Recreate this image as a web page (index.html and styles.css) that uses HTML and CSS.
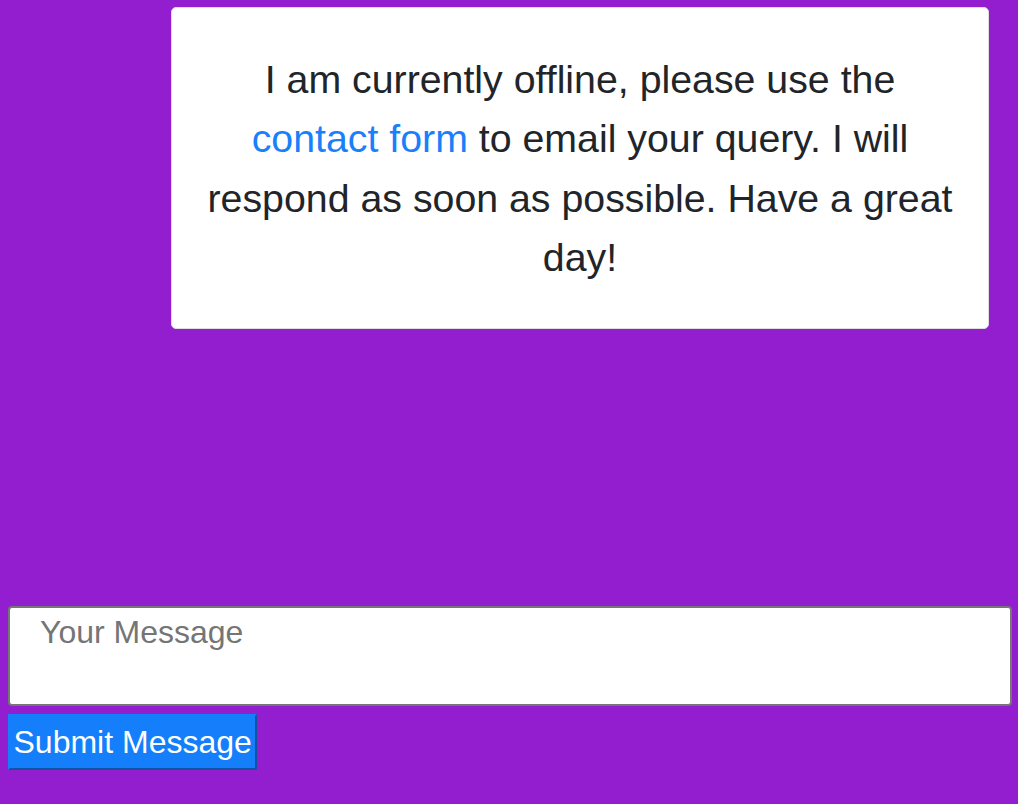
FILE: index.html
```html
<!DOCTYPE html>
<html lang="en">
<head>
<meta charset="utf-8">
<title>Chat</title>
<link rel="stylesheet" href="styles.css">
</head>
<body>
<main class="chat">
  <div class="messages">
    <div class="bubble">
      <p class="bubble-text">I am currently offline, please use the <a class="link" href="#">contact form</a> to email your query. I will respond as soon as possible. Have a great day!</p>
    </div>
  </div>
  <form class="composer">
    <textarea class="input" placeholder="Your Message"></textarea>
    <button class="submit" type="button">Submit Message</button>
  </form>
</main>
</body>
</html>
```

FILE: styles.css
```css
html, body {
  margin: 0;
  padding: 0;
}
body {
  background: #921ecf;
  font-family: "Liberation Sans", Arial, sans-serif;
  height: 804px;
  overflow: hidden;
}
.chat {
  display: flex;
  flex-direction: column;
  padding: 7px 0 0 8px;
}
.messages {
  display: flex;
  justify-content: flex-end;
  align-items: flex-start;
  padding-right: 29px;
  height: 599px;
}
.bubble {
  box-sizing: border-box;
  width: 818px;
  background: #fff;
  border: 1px solid #dedede;
  border-radius: 5px;
  padding: 42px 32px 41px;
}
.bubble-text {
  margin: 0;
  text-align: center;
  color: #212529;
  font-size: 39.3px;
  line-height: 59.33px;
}
.link {
  color: #1a7ffb;
  text-decoration: none;
}
.composer {
  display: flex;
  flex-direction: column;
  align-items: flex-start;
  gap: 8px;
}
.input {
  box-sizing: border-box;
  width: 1004px;
  height: 100px;
  border: 2px solid #767676;
  border-radius: 4px;
  padding: 6px 30px;
  font-family: "Liberation Sans", Arial, sans-serif;
  font-size: 32px;
  resize: none;
  background: #fff;
  margin: 0;
}
.input::placeholder {
  color: #757575;
}
.submit {
  box-sizing: border-box;
  height: 56px;
  margin: 0;
  padding: 0 3.5px;
  background: #147efb;
  border: 2px outset #147efb;
  color: #fff;
  font-family: "Liberation Sans", Arial, sans-serif;
  font-size: 32px;
  text-align: center;
  white-space: nowrap;
}
```
